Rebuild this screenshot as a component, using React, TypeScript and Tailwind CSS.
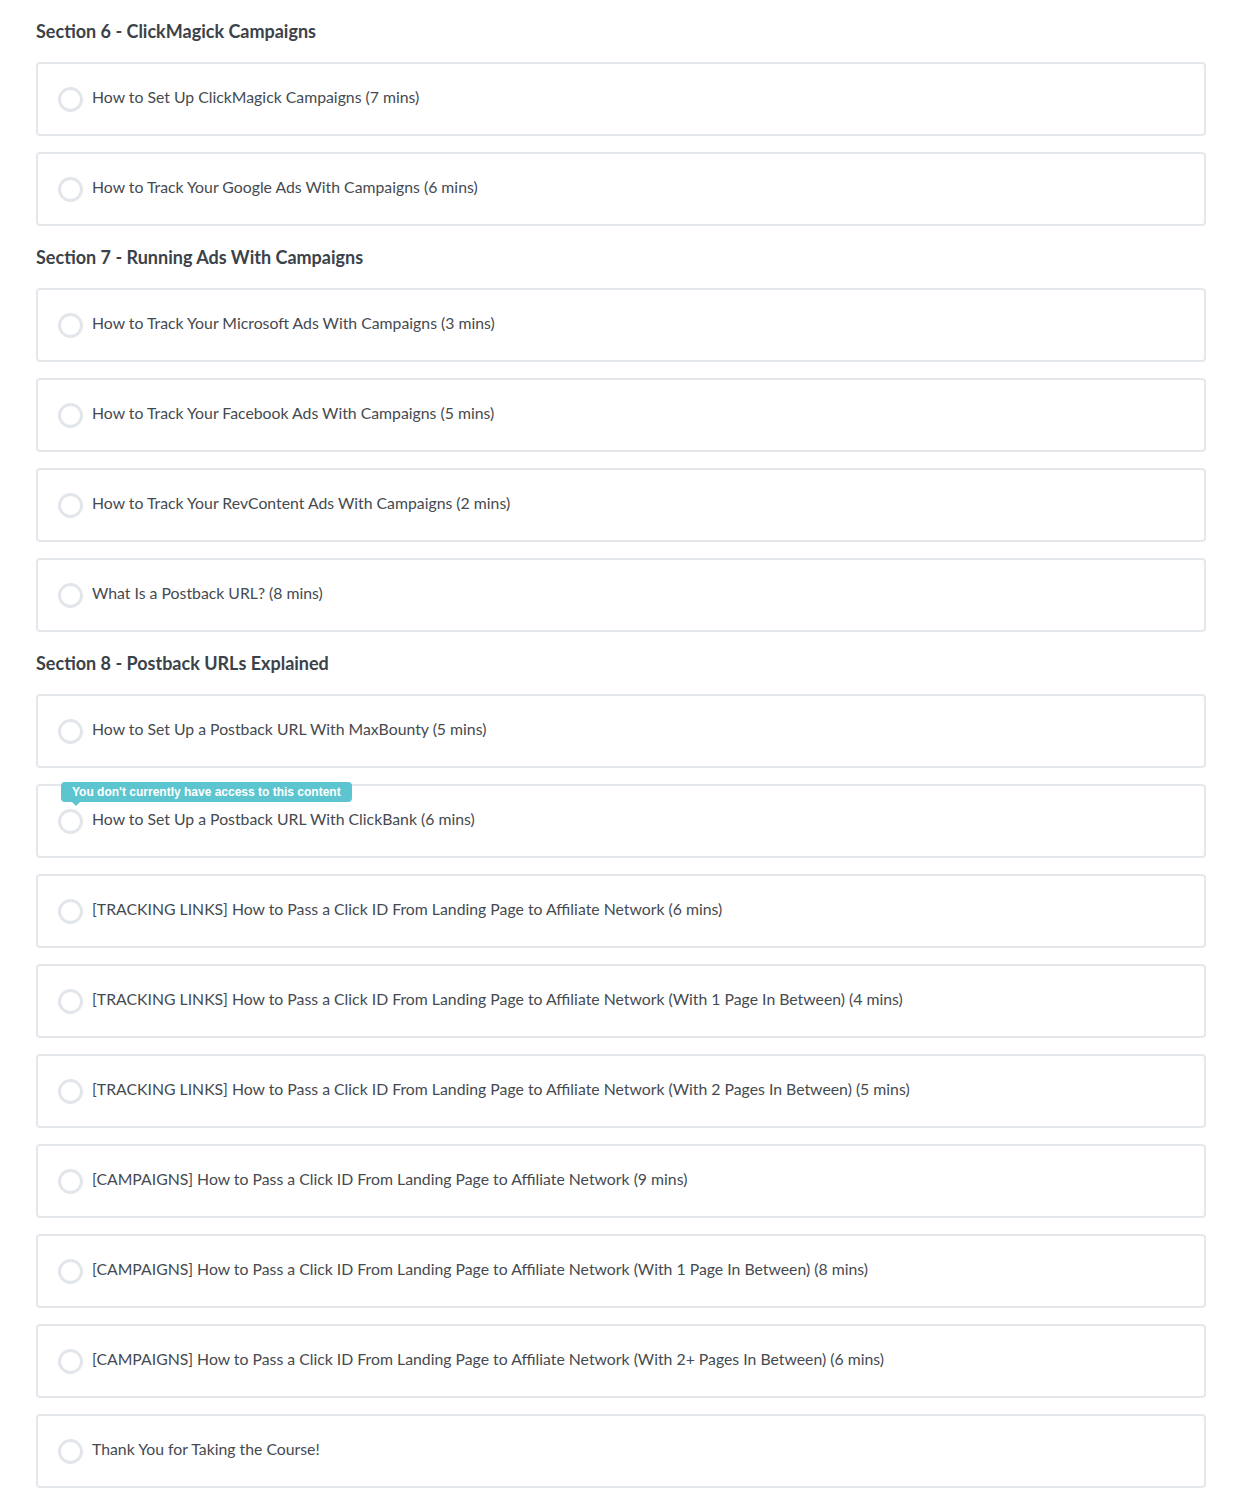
import React from 'react';

type Section = { title: string; lessons: string[] };

const sections: Section[] = [
  {
    title: 'Section 6 - ClickMagick Campaigns',
    lessons: [
      'How to Set Up ClickMagick Campaigns (7 mins)',
      'How to Track Your Google Ads With Campaigns (6 mins)',
    ],
  },
  {
    title: 'Section 7 - Running Ads With Campaigns',
    lessons: [
      'How to Track Your Microsoft Ads With Campaigns (3 mins)',
      'How to Track Your Facebook Ads With Campaigns (5 mins)',
      'How to Track Your RevContent Ads With Campaigns (2 mins)',
      'What Is a Postback URL? (8 mins)',
    ],
  },
  {
    title: 'Section 8 - Postback URLs Explained',
    lessons: [
      'How to Set Up a Postback URL With MaxBounty (5 mins)',
      'How to Set Up a Postback URL With ClickBank (6 mins)',
      '[TRACKING LINKS] How to Pass a Click ID From Landing Page to Affiliate Network (6 mins)',
      '[TRACKING LINKS] How to Pass a Click ID From Landing Page to Affiliate Network (With 1 Page In Between) (4 mins)',
      '[TRACKING LINKS] How to Pass a Click ID From Landing Page to Affiliate Network (With 2 Pages In Between) (5 mins)',
      '[CAMPAIGNS] How to Pass a Click ID From Landing Page to Affiliate Network (9 mins)',
      '[CAMPAIGNS] How to Pass a Click ID From Landing Page to Affiliate Network (With 1 Page In Between) (8 mins)',
      '[CAMPAIGNS] How to Pass a Click ID From Landing Page to Affiliate Network (With 2+ Pages In Between) (6 mins)',
      'Thank You for Taking the Course!',
    ],
  },
];

function LessonRow({ title, locked }: { title: string; locked?: boolean }) {
  return (
    <div className="relative flex h-[74px] items-center rounded-[4px] border-2 border-[#e4e7eb] bg-white pl-[20px]">
      {locked && (
        <div className="absolute left-[23px] top-[-4px] rounded-[4px] bg-[#5cc5cf] px-[11px] py-[3px] text-[12px] font-bold leading-[14px] text-white [font-family:'Liberation_Sans',Arial,sans-serif]">
          You don't currently have access to this content
          <span className="absolute left-[11px] top-full h-0 w-0 border-x-[4px] border-t-[4px] border-x-transparent border-t-[#5cc5cf]" />
        </div>
      )}
      <span className="mt-[1px] h-[25px] w-[25px] shrink-0 rounded-full border-[3px] border-[#e2e6ea]" />
      <span className="ml-[9px] pb-[4px] text-[15.8px] text-[#454a50]">{title}</span>
    </div>
  );
}

export default function App() {
  return (
    <div className="min-h-[1499px] bg-white px-[36px] pb-[11px] [font-family:Lato,'Noto_Sans',sans-serif]">
      <div className="w-[1170px]">
        {sections.map((s) => (
          <section key={s.title}>
            <h2 className="flex h-[62px] items-center text-[18px] font-bold text-[#3c4249]">{s.title}</h2>
            <div className="flex flex-col gap-[16px]">
              {s.lessons.map((l) => (
                <LessonRow key={l} title={l} locked={l.includes('ClickBank')} />
              ))}
            </div>
          </section>
        ))}
      </div>
    </div>
  );
}
